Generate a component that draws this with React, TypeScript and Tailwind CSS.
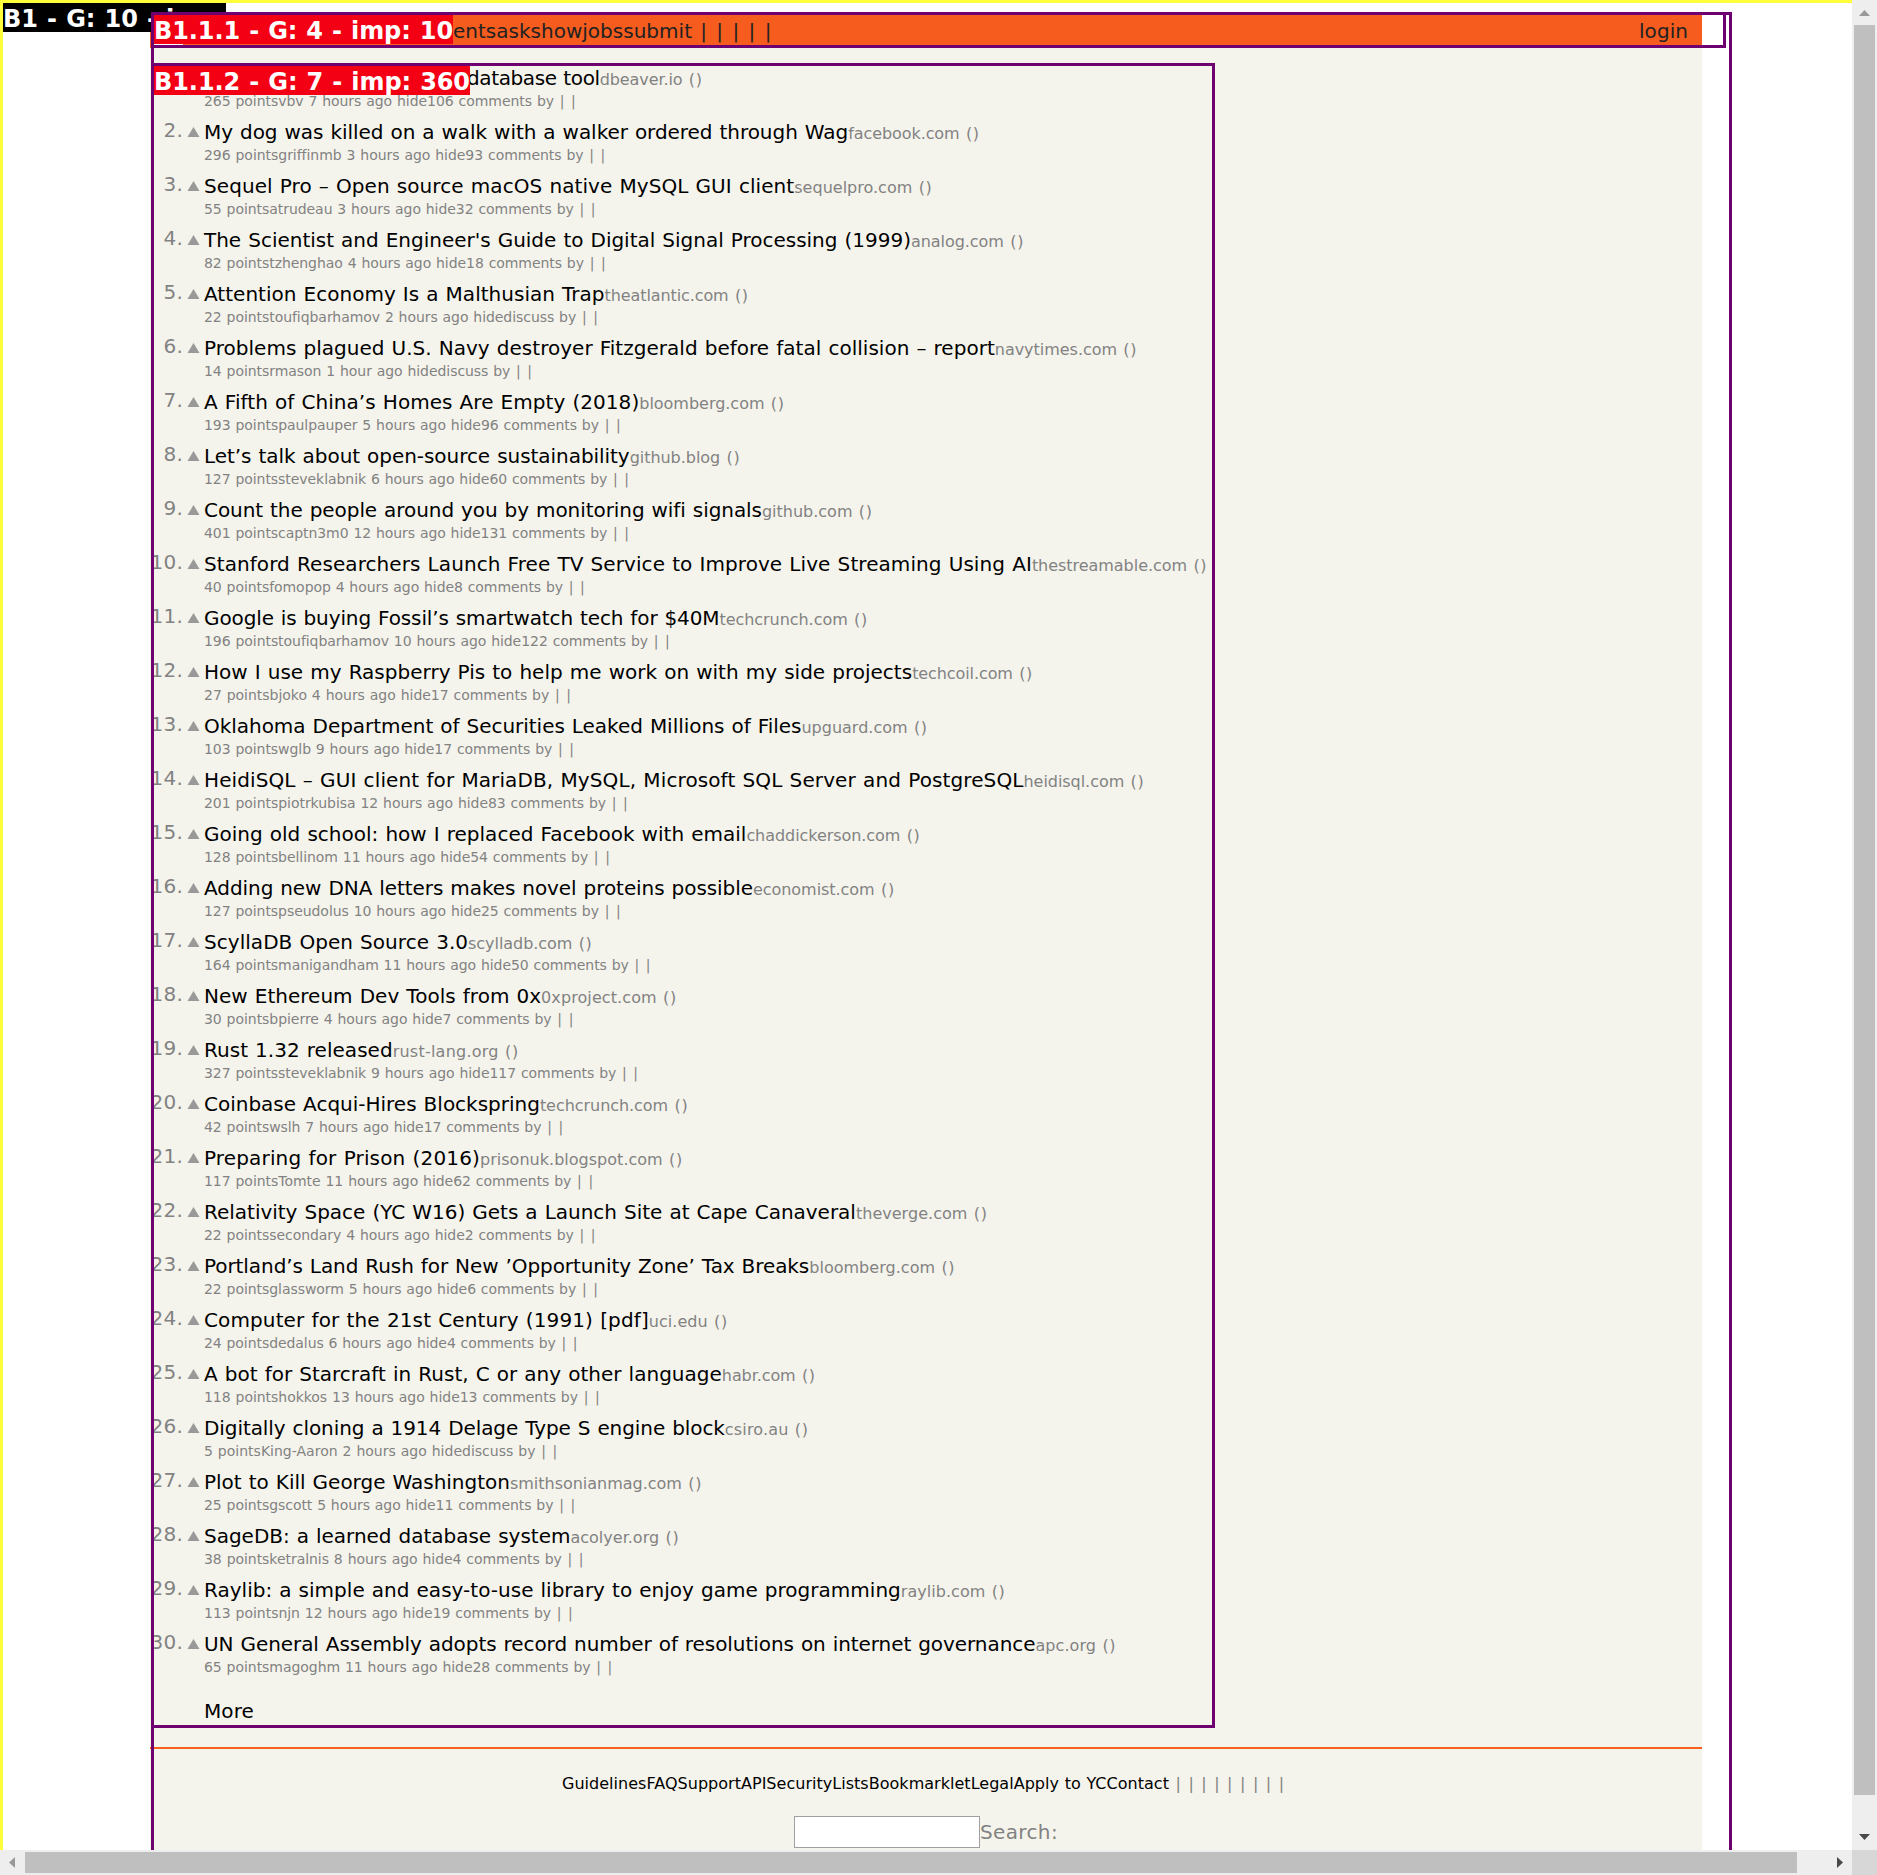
import { useLayoutEffect, useRef, useState } from "react";

type Story = {
  title: string;
  site: string;
  meta: string;
  titleW: number;
  siteW: number;
  metaW: number;
};

const LEFT = 204;
const K = 1.19707;
const PARENS_W = 20.2;
const META_BARS_W = 22.6;

// Right edges of title, site and meta line, in layout units.
function story(title: string, site: string, meta: string, a: number, b: number, c: number): Story {
  return {
    title,
    site,
    meta: meta + " by",
    titleW: a * K - LEFT,
    siteW: (b - a) * K + 1.2 - PARENS_W,
    metaW: c * K - LEFT + 2 - META_BARS_W,
  };
}

const stories: Story[] = [
  story("database tool", "dbeaver.io", "265 pointsvbv 7 hours ago hide106 comments", 501, 586, 480),
  story("My dog was killed on a walk with a walker ordered through Wag", "facebook.com", "296 pointsgriffinmb 3 hours ago hide93 comments", 708.5, 817.5, 504.5),
  story("Sequel Pro – Open source macOS native MySQL GUI client", "sequelpro.com", "55 pointsatrudeau 3 hours ago hide32 comments", 663.5, 778, 496.5),
  story("The Scientist and Engineer's Guide to Digital Signal Processing (1999)", "analog.com", "82 pointstzhenghao 4 hours ago hide18 comments", 761, 854.5, 505),
  story("Attention Economy Is a Malthusian Trap", "theatlantic.com", "22 pointstoufiqbarhamov 2 hours ago hidediscuss", 505, 624.5, 498.5),
  story("Problems plagued U.S. Navy destroyer Fitzgerald before fatal collision – report", "navytimes.com", "14 pointsrmason 1 hour ago hidediscuss", 831, 949, 443.5),
  story("A Fifth of China’s Homes Are Empty (2018)", "bloomberg.com", "193 pointspaulpauper 5 hours ago hide96 comments", 534, 654.5, 517.5),
  story("Let’s talk about open-source sustainability", "github.blog", "127 pointssteveklabnik 6 hours ago hide60 comments", 526, 617.5, 524.5),
  story("Count the people around you by monitoring wifi signals", "github.com", "401 pointscaptn3m0 12 hours ago hide131 comments", 636.5, 728, 524.5),
  story("Stanford Researchers Launch Free TV Service to Improve Live Streaming Using AI", "thestreamable.com", "40 pointsfomopop 4 hours ago hide8 comments", 862, 1007.5, 487.5),
  story("Google is buying Fossil’s smartwatch tech for $40M", "techcrunch.com", "196 pointstoufiqbarhamov 10 hours ago hide122 comments", 601, 724, 558.5),
  story("How I use my Raspberry Pis to help me work on with my side projects", "techcoil.com", "27 pointsbjoko 4 hours ago hide17 comments", 762, 862, 476),
  story("Oklahoma Department of Securities Leaked Millions of Files", "upguard.com", "103 pointswglb 9 hours ago hide17 comments", 669.5, 774, 478.5),
  story("HeidiSQL – GUI client for MariaDB, MySQL, Microsoft SQL Server and PostgreSQL", "heidisql.com", "201 pointspiotrkubisa 12 hours ago hide83 comments", 855, 955, 523.5),
  story("Going old school: how I replaced Facebook with email", "chaddickerson.com", "128 pointsbellinom 11 hours ago hide54 comments", 623.5, 768, 508.5),
  story("Adding new DNA letters makes novel proteins possible", "economist.com", "127 pointspseudolus 10 hours ago hide25 comments", 629, 746.5, 517.5),
  story("ScyllaDB Open Source 3.0", "scylladb.com", "164 pointsmanigandham 11 hours ago hide50 comments", 391, 494, 542.5),
  story("New Ethereum Dev Tools from 0x", "0xproject.com", "30 pointsbpierre 4 hours ago hide7 comments", 452, 564.5, 478),
  story("Rust 1.32 released", "rust-lang.org", "327 pointssteveklabnik 9 hours ago hide117 comments", 328, 432.5, 532),
  story("Coinbase Acqui-Hires Blockspring", "techcrunch.com", "42 pointswslh 7 hours ago hide17 comments", 451, 574, 469.5),
  story("Preparing for Prison (2016)", "prisonuk.blogspot.com", "117 pointsTomte 11 hours ago hide62 comments", 401, 569.5, 494.5),
  story("Relativity Space (YC W16) Gets a Launch Site at Cape Canaveral", "theverge.com", "22 pointssecondary 4 hours ago hide2 comments", 715, 824, 496.5),
  story("Portland’s Land Rush for New ’Opportunity Zone’ Tax Breaks", "bloomberg.com", "22 pointsglassworm 5 hours ago hide6 comments", 676, 797, 498.5),
  story("Computer for the 21st Century (1991) [pdf]", "uci.edu", "24 pointsdedalus 6 hours ago hide4 comments", 542, 607, 481.5),
  story("A bot for Starcraft in Rust, C or any other language", "habr.com", "118 pointshokkos 13 hours ago hide13 comments", 603, 680.5, 500),
  story("Digitally cloning a 1914 Delage Type S engine block", "csiro.au", "5 pointsKing-Aaron 2 hours ago hidediscuss", 605.5, 674.5, 464.5),
  story("Plot to Kill George Washington", "smithsonianmag.com", "25 pointsgscott 5 hours ago hide11 comments", 426, 585.5, 479.5),
  story("SageDB: a learned database system", "acolyer.org", "38 pointsketralnis 8 hours ago hide4 comments", 476.5, 566.5, 486.5),
  story("Raylib: a simple and easy-to-use library to enjoy game programming", "raylib.com", "113 pointsnjn 12 hours ago hide19 comments", 752.5, 839, 477.5),
  story("UN General Assembly adopts record number of resolutions on internet governance", "apc.org", "65 pointsmagoghm 11 hours ago hide28 comments", 865, 931.5, 510.5),
];

// Spaces letters evenly so that the text takes exactly the given width.
function Fit({ text, width, className = "" }: { text: string; width: number; className?: string }) {
  const ref = useRef<HTMLSpanElement>(null);
  const [spacing, setSpacing] = useState(0);
  useLayoutEffect(() => {
    const el = ref.current;
    if (el) {
      const natural = el.getBoundingClientRect().width - spacing * text.length;
      setSpacing((width - natural) / text.length);
    }
  }, [text, width]);
  return (
    <span ref={ref} className={`whitespace-pre [word-spacing:0.035em] ${className}`} style={{ letterSpacing: `${spacing}px` }}>
      {text}
    </span>
  );
}

function Row({ s, n }: { s: Story; n: number }) {
  return (
    <li className="flex h-[54px]">
      <div className="flex w-[33px] shrink-0 justify-end text-[20px] leading-[22px] tracking-[0.2px] text-[#828282]">
        {n > 1 ? `${n}.` : ""}
      </div>
      <div className="w-[21px] shrink-0 pl-[4px] pt-[8px]">
        {n > 1 && (
          <svg width="13" height="10" viewBox="0 0 13 10" className="block">
            <path d="M6.5 0 L12.5 10 H0.5 Z" fill="#999" />
          </svg>
        )}
      </div>
      <div className="whitespace-nowrap">
        <div className="flex h-[26px] items-baseline text-[20px] leading-[26px] text-black">
          {n === 1 ? (
            <>
              <span className="w-[263px] shrink-0" />
              <Fit text={s.title} width={s.titleW - 263} />
            </>
          ) : (
            <Fit text={s.title} width={s.titleW} />
          )}
          <Fit text={s.site} width={s.siteW} className="text-[16px] text-[#828282]" />
          <Fit text=" ()" width={PARENS_W} className="text-[16px] text-[#828282]" />
        </div>
        <div className="mt-px flex h-[18px] text-[14px] leading-[18px] text-[#828282]">
          <Fit text={s.meta} width={s.metaW} />
          <Fit text=" | |" width={META_BARS_W} />
        </div>
      </div>
    </li>
  );
}

export default function App() {
  return (
    <div className="relative flex h-[1875px] w-[1877px] flex-col overflow-hidden bg-white font-['DejaVu_Sans',sans-serif]">
      <div className="flex h-[1850px]">
        <div className="h-full w-[1852px] overflow-hidden border-l-[3px] border-t-[3px] border-[#ffff3c]">
          <main className="ml-[147px] mt-[9px] h-[1838px] w-[1552px] bg-[#f5f4ec]">
            <header className="flex h-[36px] items-baseline bg-[#f55c1e] pt-[5px] text-[20px] leading-[28px] text-[#222]">
              <Fit text="entsaskshowjobssubmit" width={239} className="ml-[303px]" />
              <Fit text=" | | | | |" width={80.6} />
              <span className="ml-auto mr-[14px]">
                <Fit text="login" width={49} />
              </span>
            </header>
            <ol className="mt-[17px]">
              {stories.map((s, i) => (
                <Row key={s.title} s={s} n={i + 1} />
              ))}
            </ol>
            <div className="pl-[54px] pt-[13px] text-[20px] leading-[26px] text-black">
              <Fit text="More" width={50} />
            </div>
            <footer className="mt-[23px] border-t-2 border-[#f95f1f]">
              <div className="flex pl-[412px] pt-[23px] text-[16px] leading-[24px]">
                <Fit text="GuidelinesFAQSupportAPISecurityListsBookmarkletLegalApply to YCContact" width={607} className="text-black" />
                <Fit text=" | | | | | | | | |" width={116} className="text-[#828282]" />
              </div>
              <div className="flex pl-[644px] pt-[20px]">
                <input aria-label="Search" className="h-[32px] w-[186px] border border-[#a0a0a0] bg-white" />
                <span className="pt-[3px] text-[20px] leading-[26px] text-[#828282]">
                  <Fit text="Search:" width={78} />
                </span>
              </div>
            </footer>
          </main>
        </div>
        <div className="flex w-[25px] flex-col items-center bg-[#eee]">
          <svg width="11" height="6" className="mt-[10px] shrink-0">
            <path d="M0 6 L5.5 0 L11 6Z" fill="#999" />
          </svg>
          <div className="mt-[9px] h-[1770px] w-[21px] shrink-0 bg-[#bfbfbf]" />
          <svg width="11" height="6" className="mt-[39px] shrink-0">
            <path d="M0 0 H11 L5.5 6Z" fill="#484848" />
          </svg>
        </div>
      </div>
      <div className="flex h-[25px] items-center bg-[#eee]">
        <svg width="6" height="11" className="ml-[9px] shrink-0">
          <path d="M6 0 V11 L0 5.5Z" fill="#999" />
        </svg>
        <div className="ml-[10px] h-[21px] w-[1772px] shrink-0 bg-[#bfbfbf]" />
        <svg width="6" height="11" className="ml-[40px] shrink-0">
          <path d="M0 0 V11 L6 5.5Z" fill="#484848" />
        </svg>
        <div className="ml-auto h-[25px] w-[25px] bg-[#d7d7d7]" />
      </div>

      {/* Block annotations laid over the page */}
      <div className="absolute left-[3px] top-[3px] h-[29px] w-[223px] overflow-hidden bg-black text-[24px] font-bold leading-[32px] text-white">
        <Fit text="B1 - G: 10 - imp:" width={223} />
      </div>
      <div className="absolute left-[150px] top-[32px] h-[16px] w-[1px] bg-[#f55c1e]" />
      <div className="absolute left-[151px] top-[12px] h-[1838px] w-[1581px] border-x-[3px] border-t-[3px] border-[#6f0070]" />
      <div className="absolute left-[151px] top-[12px] h-[36px] w-[1575px] border-[3px] border-[#6f0070]" />
      <div className="absolute left-[151px] top-[63px] h-[1665px] w-[1064px] border-[3px] border-[#6f0070]" />
      <div className="absolute left-[154px] top-[44px] h-px w-[29px] bg-white" />
      <div className="absolute left-[154px] top-[15px] h-[29px] w-[299px] overflow-hidden bg-[#f30014] text-[24px] font-bold leading-[32px] text-white">
        <Fit text="B1.1.1 - G: 4 - imp: 10" width={299} />
      </div>
      <div className="absolute left-[154px] top-[66px] h-[29px] w-[316px] overflow-hidden bg-[#f30014] text-[24px] font-bold leading-[32px] text-white">
        <Fit text="B1.1.2 - G: 7 - imp: 360" width={316} />
      </div>
    </div>
  );
}
